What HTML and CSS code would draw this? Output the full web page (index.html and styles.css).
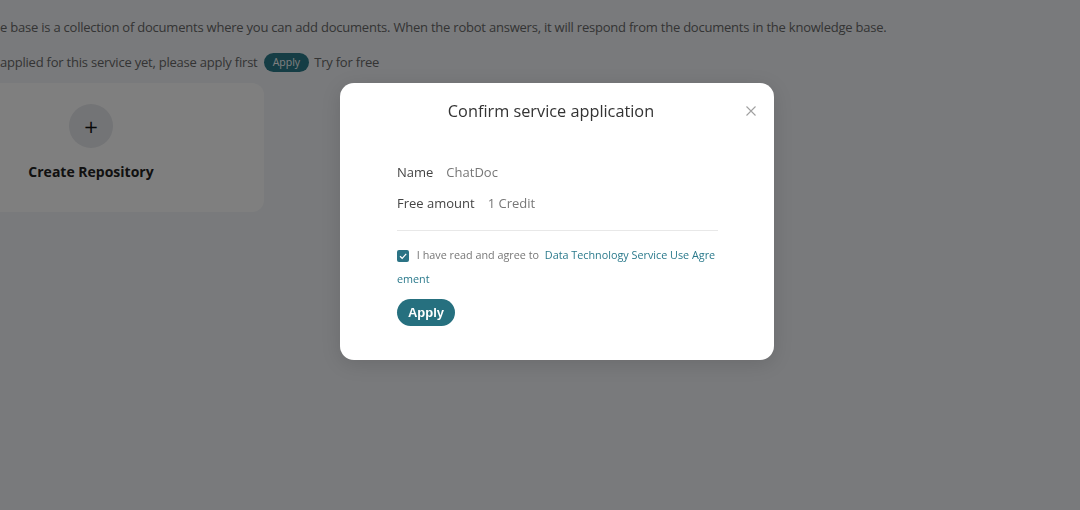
FILE: index.html
```html
<!DOCTYPE html>
<html>
<head>
<meta charset="utf-8">
<link rel="stylesheet" href="styles.css">
</head>
<body>
<div class="page">
  <p class="desc">e base is a collection of documents where you can add documents. When the robot answers, it will respond from the documents in the knowledge base.</p>
  <p class="notice">applied for this service yet, please apply first <span class="pill">Apply</span> Try for free</p>
  <div class="cards">
    <div class="card">
      <div class="plus">+</div>
      <div class="card-title">Create Repository</div>
    </div>
  </div>
</div>
<div class="mask"></div>
<div class="modal">
  <div class="modal-head">
    <h2 class="modal-title">Confirm service application</h2>
    <svg class="close" width="12" height="12" viewBox="0 0 12 12"><path d="M1.5 1.5 L10.5 10.5 M10.5 1.5 L1.5 10.5" stroke="#a0a0a0" stroke-width="1.1" fill="none"/></svg>
  </div>
  <div class="modal-body">
    <div class="row"><span class="label">Name</span><span class="value">ChatDoc</span></div>
    <div class="row"><span class="label">Free amount</span><span class="value">1 Credit</span></div>
    <div class="divider"></div>
    <div class="agree">
      <span class="check"><svg width="10" height="10" viewBox="0 0 10 10"><path d="M2 5.2 L4.2 7.3 L8.2 2.8" stroke="#fff" stroke-width="1.2" fill="none"/></svg></span>
      <span class="agree-text">I have read and agree to</span>
      <a class="link">Data Technology Service Use Agreement</a>
    </div>
    <button class="apply">Apply</button>
  </div>
</div>
</body>
</html>
```
FILE: styles.css
```css
* { box-sizing: border-box; }
html, body { margin: 0; padding: 0; }
body {
  width: 1080px;
  height: 510px;
  overflow: hidden;
  background: #f3f5f9;
  font-family: "Open Sans", "Noto Sans", sans-serif;
  position: relative;
}
.page {
  padding-top: 17px;
}
.desc {
  margin: 0;
  font-size: 13px;
  letter-spacing: -0.22px;
  line-height: 20px;
  color: #686868;
  white-space: nowrap;
}
.notice {
  margin: 15px 0 0 0;
  font-size: 13px;
  letter-spacing: -0.22px;
  line-height: 20px;
  color: #686868;
  display: flex;
  align-items: center;
  white-space: pre;
}
.pill {
  display: inline-block;
  background: #2a7a8a;
  color: #fff;
  font-size: 10.5px;
  letter-spacing: 0;
  line-height: 19px;
  padding: 0 9px;
  border-radius: 10px;
  margin: 0 2px 0 3px;
}
.cards {
  margin-top: 11px;
  margin-left: -82px;
}
.card {
  width: 346px;
  height: 129px;
  background: #fff;
  border-radius: 12px;
  display: flex;
  flex-direction: column;
  align-items: center;
  padding-top: 21px;
}
.plus {
  width: 44px;
  height: 44px;
  border-radius: 50%;
  background: #e6e8ec;
  display: flex;
  align-items: center;
  justify-content: center;
  font-size: 18px;
  color: #111;
  font-family: "DejaVu Sans", sans-serif;
}
.card-title {
  margin-top: 14px;
  font-size: 14px;
  font-weight: 700;
  color: #222;
}
.mask {
  position: fixed;
  inset: 0;
  background: rgba(0, 0, 0, 0.5);
}
.modal {
  position: absolute;
  left: 340px;
  top: 83px;
  width: 434px;
  height: 277px;
  background: #fff;
  border-radius: 14px;
  box-shadow: 0 4px 20px rgba(0,0,0,0.12);
}
.modal-head {
  position: relative;
  height: 56px;
  display: flex;
  justify-content: center;
  align-items: center;
}
.modal-title {
  margin: 0;
  font-weight: 400;
  font-size: 16.3px;
  color: #333;
  transform: translateX(-6px);
}
.close {
  position: absolute;
  right: 17px;
  top: 22px;
}
.modal-body {
  padding: 24px 56px 0 57px;
}
.row {
  display: flex;
  gap: 13px;
  font-size: 13px;
  line-height: 18px;
  margin-bottom: 13px;
}
.label { color: #444; }
.value { color: #777; }
.divider {
  height: 1px;
  background: #e8e8e8;
  margin-top: 18px;
}
.agree {
  margin-top: 12px;
  font-size: 10.8px;
  line-height: 24px;
  color: #777;
  word-break: break-all;
}
.check {
  display: inline-flex;
  align-items: center;
  justify-content: center;
  width: 12px;
  height: 12px;
  background: #2b7385;
  border-radius: 2px;
  vertical-align: -2px;
  margin-right: 5px;
}
.link {
  color: #2b7a8c;
  margin-left: 3px;
  font-size: 10.8px;
}
.apply {
  margin-top: 8px;
  width: 58px;
  height: 27px;
  border: none;
  border-radius: 14px;
  background: #26707f;
  color: #fff;
  font-family: "Liberation Sans", Arial, sans-serif;
  font-size: 13px;
  font-weight: 700;
  padding: 0;
}
```
